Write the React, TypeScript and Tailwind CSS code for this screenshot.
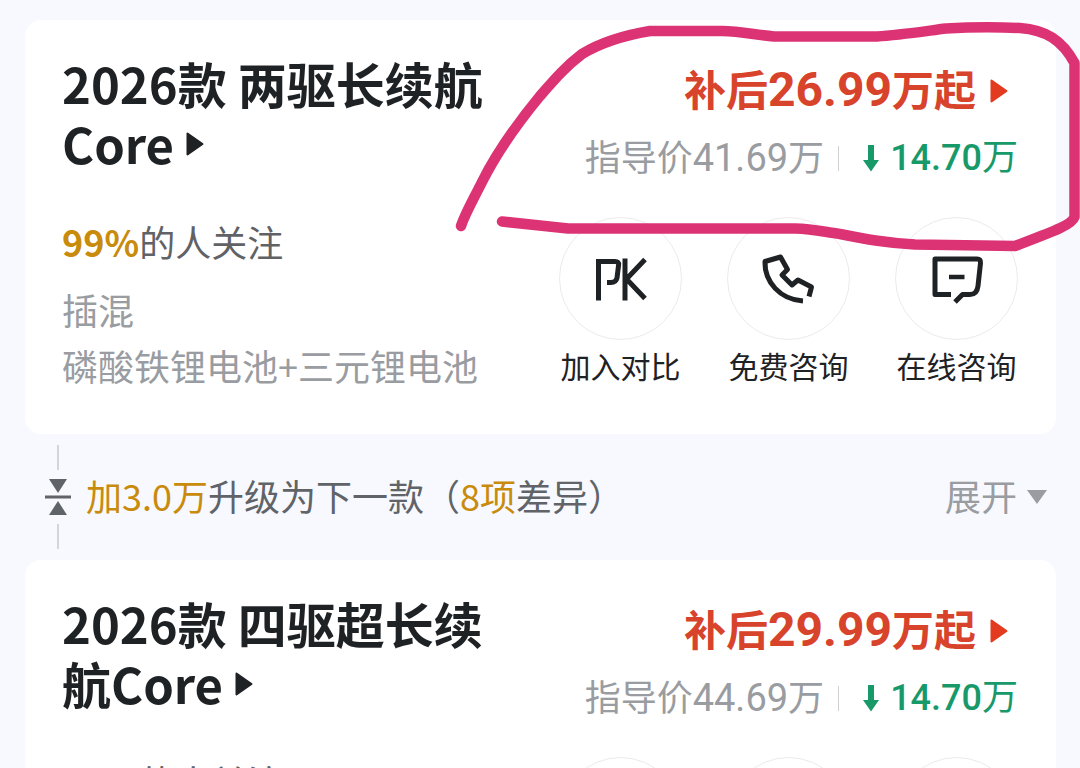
import type { ReactNode } from "react";

type Trim = {
  name: string;
  attention: string;
  price: string;
  guide: string;
  drop: string;
};

const trims: Trim[] = [
  { name: "2026款 两驱长续航Core", attention: "99%", price: "26.99", guide: "41.69", drop: "14.70" },
  { name: "2026款 四驱超长续航Core", attention: "99%", price: "29.99", guide: "44.69", drop: "14.70" },
];

function PlayMark({ className }: { className: string }) {
  return (
    <svg viewBox="0 0 18 24" className={className} aria-hidden="true">
      <path d="M1.5 1.5 L16.5 12 L1.5 22.5 Z" fill="currentColor" stroke="currentColor" strokeWidth="2" strokeLinejoin="round" />
    </svg>
  );
}

function PkIcon() {
  return (
    <svg viewBox="0 0 60 60" className="size-[60px]" fill="none" stroke="currentColor" strokeWidth="5" aria-hidden="true">
      <path d="M7.500 51.500 V12.500 H24 Q28 12.500 27.600 16 L26 29 Q25 33.500 20 33.500 H16" />
      <path d="M34 9.500 V51.500 M54 10.500 L35.500 30 L54 49.500" />
    </svg>
  );
}

function PhoneIcon() {
  return (
    <svg viewBox="0 0 60 60" className="size-[60px]" fill="none" stroke="currentColor" strokeWidth="5" strokeLinejoin="round" aria-hidden="true">
      <path d="M44 52 C21 50.500 5.500 33 6 12.500 L21.500 8 L28.500 20.500 L23 26 L33 36 L39 31 L52.500 38 L50 47.500" />
    </svg>
  );
}

function ChatIcon() {
  return (
    <svg viewBox="0 0 60 60" className="size-[60px]" fill="none" stroke="currentColor" strokeWidth="5" aria-hidden="true">
      <path d="M24 45.500 H8 V10 H50 Q54 10 53.500 14 L51 37 Q50 45.500 43 45.500 H35.500 L28 53" strokeLinejoin="round" />
      <path d="M22 28 H37.500" strokeWidth="4.500" />
    </svg>
  );
}

function Action({ label, children }: { label: string; children: ReactNode }) {
  return (
    <button type="button" className="flex flex-col items-center gap-[5px] text-[#1f2225]">
      <span className="flex size-[123px] items-center justify-center rounded-full border border-[#ebebed]">
        {children}
      </span>
      <span className="text-[30px] leading-10 whitespace-nowrap">{label}</span>
    </button>
  );
}

function TrimCard({ trim }: { trim: Trim }) {
  return (
    <article className="flex justify-between rounded-2xl bg-white pr-[38px] pb-[41px] pl-[37px]">
      <div className="flex flex-col pt-[33px]">
        <h2 className="max-w-[440px] text-[49px] leading-[60px] font-bold text-[#1f2225]">
          <a href="#trim">
            {trim.name}
            <PlayMark className="ml-3 inline-block h-6 w-[18px] align-[8px]" />
          </a>
        </h2>
        <p className="mt-10 text-4xl leading-[56px] text-[#606266]">
          <strong className="font-bold text-[#c98b0c]">{trim.attention}</strong>的人关注
        </p>
        <p className="mt-3 text-4xl leading-[56px] text-[#999ca1]">插混</p>
        <p className="text-4xl leading-[56px] whitespace-nowrap text-[#999ca1]">磷酸铁锂电池+三元锂电池</p>
      </div>
      <div className="flex shrink-0 flex-col items-end pt-9">
        <a href="#price" className="flex h-[70px] items-center pr-2.5 text-[42px] font-bold text-[#d8432b]">
          <span className="pb-1 leading-[60px]">
            补后<span className="font-[Roboto] text-[48px]">{trim.price}</span>万起
          </span>
          <PlayMark className="ml-3.5 h-6 w-[18px] text-[#e33b20]" />
        </a>
        <div className="flex h-16 items-center text-4xl leading-[60px] text-[#999ca1]">
          <span className="pb-1">
            指导价<span className="font-[Roboto] text-[38px]">{trim.guide}</span>万
          </span>
          <span className="ml-3.5 h-[25px] w-px bg-[#cfd1d4]" />
          <span className="flex items-center pl-[23px] text-[#17996a]">
            <svg viewBox="0 0 18 28" className="mr-2.5 h-7 w-[18px]" aria-hidden="true">
              <path d="M6 1 H12 V16 H17 L9 27.500 L1 16 H6 Z" fill="currentColor" />
            </svg>
            <span className="pb-1">
              <span className="font-[Roboto] text-[36px] font-medium">{trim.drop}</span>万
            </span>
          </span>
        </div>
        <div className="mt-[27px] flex gap-[45px]">
          <Action label="加入对比"><PkIcon /></Action>
          <Action label="免费咨询"><PhoneIcon /></Action>
          <Action label="在线咨询"><ChatIcon /></Action>
        </div>
      </div>
    </article>
  );
}

function UpgradeRow() {
  return (
    <div className="flex h-[126px] items-center justify-between pr-[9px] pl-5 text-4xl">
      <div className="flex items-center gap-[15px]">
        <div className="flex flex-col items-center gap-[9px]">
          <span className="h-[25px] w-0.5 bg-[#d3d5da]" />
          <svg viewBox="0 0 26 36" className="h-9 w-[26px] text-[#606368]" fill="currentColor" aria-hidden="true">
            <path d="M4 0 H22 L13 14 Z M0 16.500 H26 V19.500 H0 Z M13 22 L22 36 H4 Z" />
          </svg>
          <span className="h-[25px] w-0.5 bg-[#d3d5da]" />
        </div>
        <p className="pb-1 whitespace-nowrap text-[#606368]">
          <span className="text-[#c98b0c]">加3.0万</span>升级为下一款（<span className="text-[#c98b0c]">8项</span>差异）
        </p>
      </div>
      <button type="button" className="flex items-center gap-2.5 text-[#999ca1]">
        <span className="pb-1">展开</span>
        <svg viewBox="0 0 20 14" className="h-3.5 w-5" fill="currentColor" aria-hidden="true">
          <path d="M0 0 H20 L10 14 Z" />
        </svg>
      </button>
    </div>
  );
}

export default function App() {
  return (
    <main className="relative h-screen overflow-hidden bg-[#f7f9fe] pt-5 pr-6 pl-[25px] font-['Noto_Sans_CJK_SC',sans-serif]">
      <TrimCard trim={trims[0]} />
      <UpgradeRow />
      <TrimCard trim={trims[1]} />
      <svg
        viewBox="0 0 640 260"
        className="pointer-events-none absolute top-0 right-0 h-[260px] w-[640px]"
        fill="none"
        stroke="#dc3375"
        strokeWidth="10.5"
        strokeLinecap="round"
        strokeLinejoin="round"
        aria-hidden="true"
      >
        <path d="M21 226 C25 214 32 202 42 182 C56 154 72 130 100 96 C114 80 126 66 142 54 C160 43 180 36 210 31 H282 C300 31 316 35 334 36.500 H437 C460 35 486 31 506 28.500 C530 27 560 27 580 28 C606 30 622 40 634.500 63 V217 C632 225 612 232 575 246 L475 244.500 C445 243 425 239 400 234 C384 232 374 229 355 228.500 H128 L62 221.500" />
      </svg>
    </main>
  );
}
